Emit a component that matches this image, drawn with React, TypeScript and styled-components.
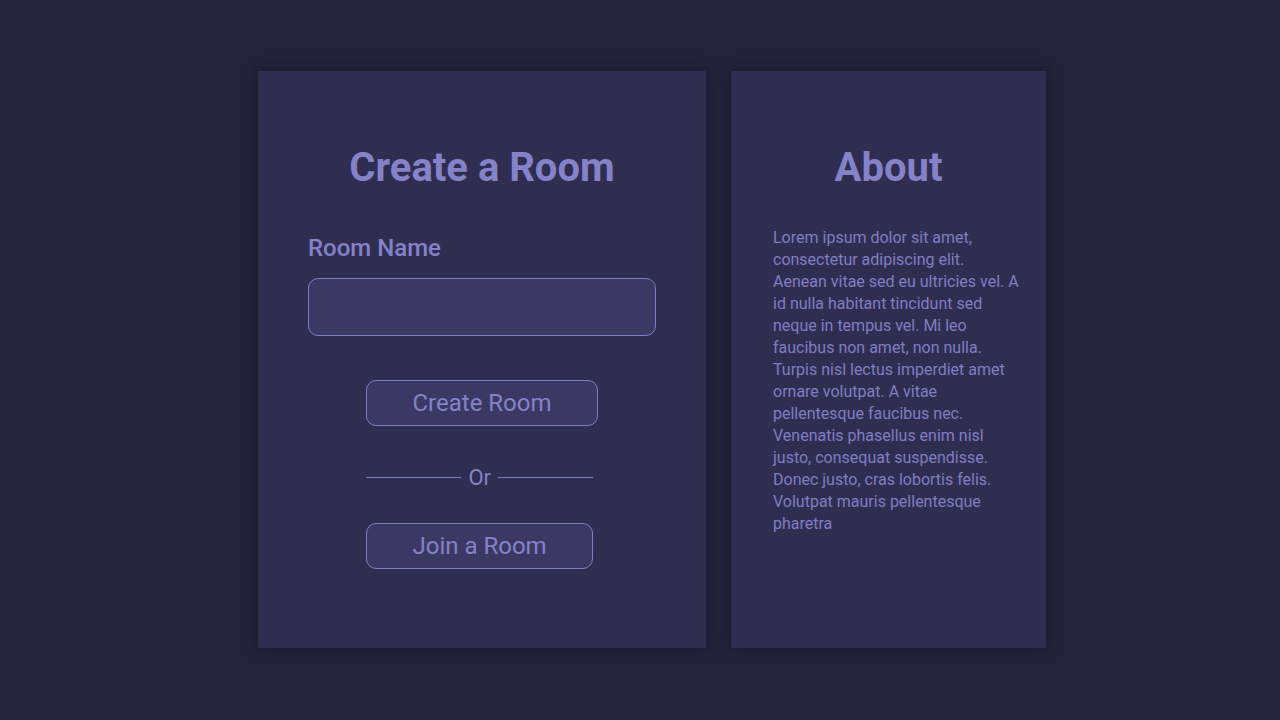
import styled, { createGlobalStyle } from "styled-components";

const GlobalStyle = createGlobalStyle`
  html, body {
    margin: 0;
    padding: 0;
    background: #24233a;
    font-family: Roboto, "Liberation Sans", sans-serif;
  }
  * { box-sizing: border-box; }
`

const Page = styled.div`
  width: 1280px;
  height: 720px;
  display: flex;
  align-items: flex-start;
  gap: 25px;
  padding: 71px 0 0 258px;
`

const Card = styled.div<{ $width: number }>`
  width: ${p => p.$width}px;
  height: 577px;
  background: #302e50;
  box-shadow: 0 0 14px rgba(10, 10, 25, 0.45);
  display: flex;
  flex-direction: column;
  padding: 73px 50px 0;
`

const Title = styled.h1`
  margin: 0;
  font-size: 40px;
  line-height: 48px;
  font-weight: 700;
  color: #8482c9;
  text-align: center;
`

const Label = styled.label`
  margin-top: 42px;
  font-size: 24px;
  line-height: 28px;
  font-weight: 500;
  color: #8482c9;
`

const Input = styled.input`
  margin-top: 16px;
  height: 58px;
  width: 100%;
  border: 1px solid #7f7dc6;
  border-radius: 10px;
  background: #3b3964;
  color: #8482c9;
  font-family: inherit;
  font-size: 20px;
  padding: 0 14px;
  outline: none;
`

const Actions = styled.div`
  align-self: center;
  display: flex;
  flex-direction: column;
  align-items: flex-start;
  margin-top: 44px;
`

const Button = styled.button`
  height: 46px;
  padding: 0 45px;
  border: 1px solid #7f7dc6;
  border-radius: 10px;
  background: #3b3964;
  color: #8482c9;
  font-family: inherit;
  font-size: 24px;
  line-height: 28px;
  cursor: pointer;
`

const OrRow = styled.div`
  display: flex;
  align-items: center;
  gap: 7px;
  margin: 37px 0 32px;
  height: 28px;
  font-size: 22px;
  color: #8482c9;
`

const Line = styled.span`
  width: 95px;
  height: 1px;
  background: #7f7dc6;
`

const AboutCard = styled(Card)`
  padding: 73px 0 0;
`

const Text = styled.p`
  margin: 35px 0 0;
  padding: 0 26px 0 42px;
  font-size: 16px;
  line-height: 22px;
  color: #7f7dc4;
`

export default function App() {
  return (
    <>
      <GlobalStyle />
      <Page>
        <Card $width={448}>
          <Title>Create a Room</Title>
          <Label htmlFor="room">Room Name</Label>
          <Input id="room" type="text" />
          <Actions>
            <Button>Create Room</Button>
            <OrRow>
              <Line />
              Or
              <Line />
            </OrRow>
            <Button>Join a Room</Button>
          </Actions>
        </Card>
        <AboutCard $width={315}>
          <Title>About</Title>
          <Text>
            Lorem ipsum dolor sit amet, consectetur adipiscing elit. Aenean vitae sed eu ultricies vel. A id nulla
            habitant tincidunt sed neque in tempus vel. Mi leo faucibus non amet, non nulla. Turpis nisl lectus
            imperdiet amet ornare volutpat. A vitae pellentesque faucibus nec. Venenatis phasellus enim nisl justo,
            consequat suspendisse. Donec justo, cras lobortis felis. Volutpat mauris pellentesque pharetra
          </Text>
        </AboutCard>
      </Page>
    </>
  )
}
